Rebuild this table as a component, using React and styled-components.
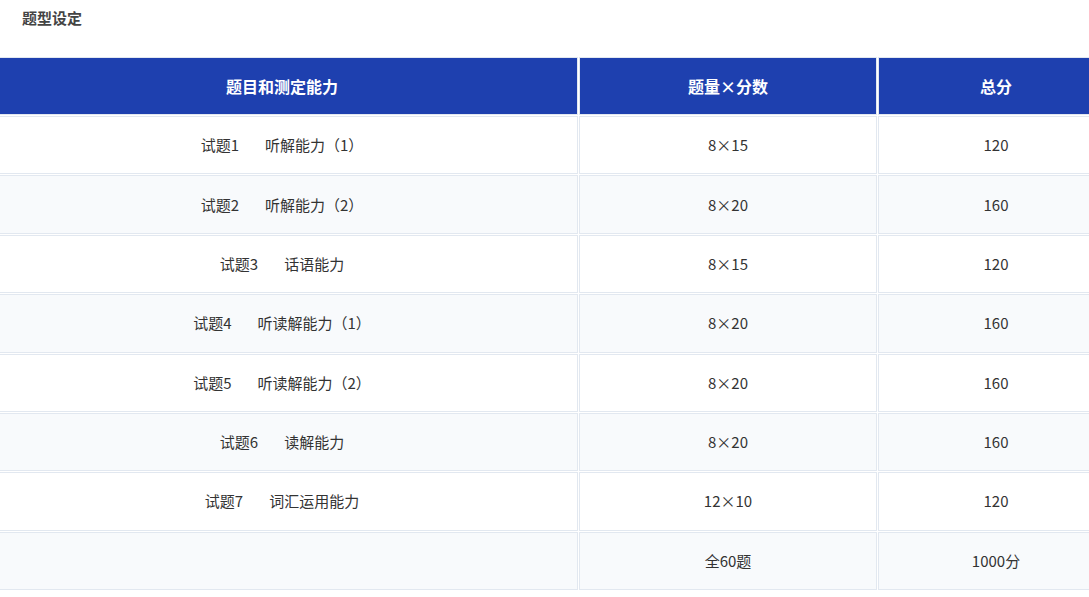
import styled, { createGlobalStyle } from 'styled-components';

const GlobalStyle = createGlobalStyle`
  body {
    margin: 0;
    background: #fff;
    font-family: "Noto Sans CJK SC", "Noto Sans", sans-serif;
    color: #333;
  }
`

const Page = styled.div`
  width: 1089px;
  overflow: hidden;
`

const Title = styled.h3`
  margin: 0;
  padding: 8px 22px 0;
  height: 48px;
  font-size: 15px;
  line-height: 20px;
  font-weight: 600;
  color: #444;
`

const Table = styled.table`
  margin-left: -15px;
  width: 1130px;
  border-collapse: separate;
  border-spacing: 1px;
  table-layout: fixed;
`

const HeadCell = styled.th`
  background: #1e40af;
  color: #fff;
  font-size: 16px;
  font-weight: 700;
  border: 1px solid #e2e8f0;
  padding: 18px 8px;
  line-height: 20px;
  text-align: center;
`

const Row = styled.tr`
  background: ${(p) => (p.$striped ? '#f8fafc' : '#fff')};
`

const Cell = styled.td`
  border: 1px solid #e2e8f0;
  padding: 18.2px 8px;
  line-height: 20px;
  font-size: 15px;
  text-align: center;
  color: #333;
`

const Num = styled.span`
  margin-right: 26px;
`

const rows = [
  ['试题1', '听解能力（1）', '8×15', '120'],
  ['试题2', '听解能力（2）', '8×20', '160'],
  ['试题3', '话语能力', '8×15', '120'],
  ['试题4', '听读解能力（1）', '8×20', '160'],
  ['试题5', '听读解能力（2）', '8×20', '160'],
  ['试题6', '读解能力', '8×20', '160'],
  ['试题7', '词汇运用能力', '12×10', '120'],
];

function App() {
  return (
    <Page>
      <GlobalStyle />
      <Title>题型设定</Title>
      <Table>
        <colgroup>
          <col style={{ width: 592 }} />
          <col style={{ width: 298 }} />
          <col style={{ width: 236 }} />
        </colgroup>
        <thead>
          <tr>
            <HeadCell>题目和测定能力</HeadCell>
            <HeadCell>题量×分数</HeadCell>
            <HeadCell>总分</HeadCell>
          </tr>
        </thead>
        <tbody>
          {rows.map((r, i) => (
            <Row key={r[0]} $striped={i % 2 === 1}>
              <Cell>
                <Num>{r[0]}</Num>
                {r[1]}
              </Cell>
              <Cell>{r[2]}</Cell>
              <Cell>{r[3]}</Cell>
            </Row>
          ))}
          <Row $striped>
            <Cell />
            <Cell>全60题</Cell>
            <Cell>1000分</Cell>
          </Row>
        </tbody>
      </Table>
    </Page>
  );
}

export default App;
